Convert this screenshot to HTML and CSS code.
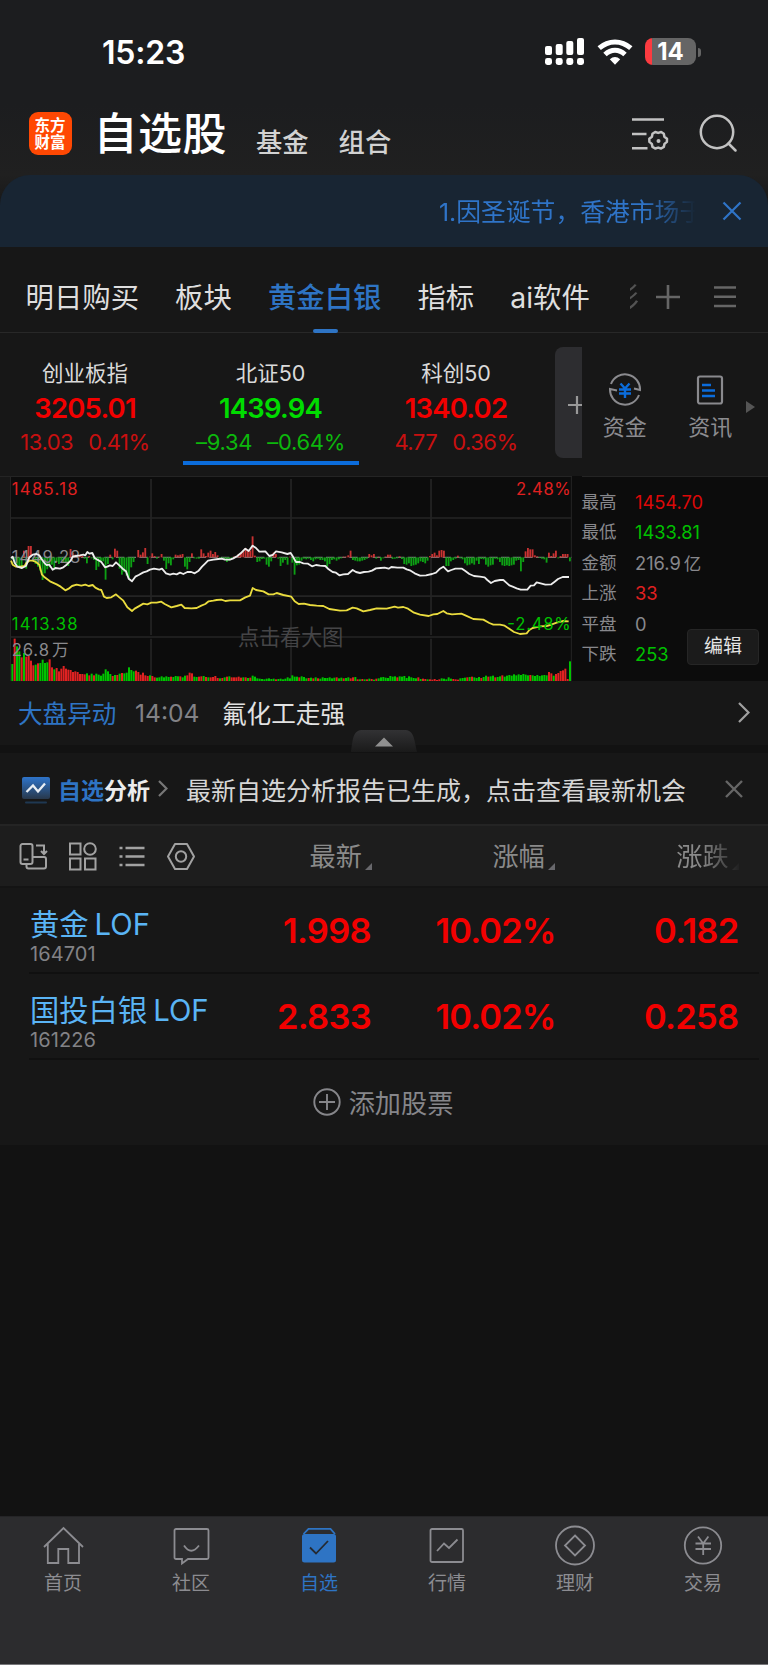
FILE: index.html
```html
<!DOCTYPE html>
<html lang="zh-CN">
<head>
<meta charset="utf-8">
<title>自选股</title>
<link rel="stylesheet" href="styles.css">
</head>
<body>
<div class="screen">
  <div class="status">
    <span class="time">15:23</span>
    <svg class="signal" width="40" height="28" viewBox="0 0 40 28" fill="#fff"><rect x="0" y="8" width="7" height="9" rx="2"/><rect x="10.7" y="6" width="7" height="11" rx="2"/><rect x="21.3" y="3" width="7" height="14" rx="2"/><rect x="32" y="0" width="7" height="17" rx="2"/><rect x="0" y="20" width="7" height="7" rx="2.4"/><rect x="10.7" y="20" width="7" height="7" rx="2.4"/><rect x="21.3" y="20" width="7" height="7" rx="2.4"/><rect x="32" y="20" width="7" height="7" rx="2.4"/></svg>
    <svg class="wifi" width="36" height="27" viewBox="0 0 36 27"><g fill="none" stroke="#fff" stroke-width="5"><path d="M2.2 9.2Q9.2 3 18 3t15.800 6.200"/><path d="M8 15.500Q12.500 11.300 18 11.300t10 4.200"/></g><path d="M12.800 20.200Q18 15.800 23.200 20.200L18 25.800Z" fill="#fff"/></svg>
    <div class="battery"><b>14</b></div><i class="nub"></i>
  </div>

  <header class="header">
    <div class="logo"><span>东方</span><span>财富</span></div>
    <h1>自选股</h1>
    <span class="sub fund">基金</span>
    <span class="sub group">组合</span>
    <svg class="manage" width="39" height="36" viewBox="0 0 39 36" fill="none" stroke="#c2c2c2" stroke-width="2.500"><path d="M1 3.500h32M1 18h14.500M1 32.300h15.500"/><path d="M24.200 16l3 .9 3-.9 2.600 1.700.6 3 2.600 2-.1 3.200-2.400 2-.7 3-2.700 1.600-2.900-.9-3 .9-2.700-1.600-.7-3-2.400-2-.1-3.200 2.600-2 .6-3Z" stroke-linejoin="round"/><circle cx="27.500" cy="25" r="2" fill="#c2c2c2" stroke="none"/></svg>
    <svg class="search" width="39" height="39" viewBox="0 0 39 39" fill="none" stroke="#c2c2c2" stroke-width="2.500"><circle cx="18" cy="18" r="16.200"/><path d="M29.500 29.500l7 7" stroke-linecap="round"/></svg>
  </header>

  <div class="notice-wrap"><div class="notice">
    <span class="notice-text">1.因圣诞节，香港市场于</span>
    <svg width="20" height="20" viewBox="0 0 20 20" stroke="#2f74c8" stroke-width="2.200"><path d="M1.500 1.500l17 17M18.500 1.500l-17 17"/></svg>
  </div></div>

  <nav class="tabs">
    <span>明日购买</span><span>板块</span><span class="on">黄金白银</span><span>指标</span><span>ai软件</span><span class="cut">彩</span>
    <svg class="plus" width="24" height="24" viewBox="0 0 24 24" stroke="#666" stroke-width="2.600"><path d="M12 0v24M0 12h24"/></svg>
    <svg class="menu" width="22" height="24" viewBox="0 0 22 24" stroke="#666" stroke-width="2.600"><path d="M0 2.500h22M0 11.800h22M0 21h22"/></svg>
  </nav>

  <section class="indices">
    <div class="index up"><em>创业板指</em><b>3205.01</b><p><span>13.03</span><span>0.41%</span></p></div>
    <div class="index down active"><em>北证50</em><b>1439.94</b><p><span>–9.34</span><span>–0.64%</span></p></div>
    <div class="index up third"><em>科创50</em><b>1340.02</b><p><span>4.77</span><span>0.36%</span></p></div>
    <div class="add"><svg width="14" height="18" viewBox="0 0 14 18" stroke="#999" stroke-width="2.200"><path d="M9 0v18M0 9h14"/></svg></div>
    <div class="tool capital"><svg width="34" height="34" viewBox="0 0 34 34" fill="none" stroke="#8a8a8e" stroke-width="2"><path d="M3 11A15 15 0 0 1 32 17l-6-1.500M31 22A15 15 0 0 1 2 16l7 1.500"/><path stroke="#0b6cdb" stroke-width="2.400" d="M12.500 10.500l4.500 5 4.500-5M11 16.500h12M11 20.500h12M17 15.500V25"/></svg><span>资金</span></div>
    <div class="tool news"><svg width="28" height="34" viewBox="0 0 28 34" fill="none" stroke="#8a8a8e" stroke-width="2.200"><rect x="2" y="3.500" width="24" height="27" rx="2"/><path stroke="#0b6cdb" stroke-width="2.500" d="M6 12h9M6 17.500h13M6 23h13"/></svg><span>资讯</span></div>
    <i class="more"></i>
  </section>

  <section class="market">
    <svg class="chart" width="576" height="206" viewBox="0 18 1728 618">
      <rect x="33" y="20" width="1680" height="614" fill="#0c0c0c"/>
      <g stroke="#242424" fill="none"><path stroke-width="3" d="M0 19.500H1728M31.500 20V634H1714V20"/><path stroke-width="5" d="M33 144H1714M33 378.500H1714M33 501H1714M453 27V495M873 27V495M1293 27V495M453 506V634M873 506V634M1293 506V634"/></g>
      <path d="M33 262H1714" stroke="#777" stroke-width="3.500" stroke-dasharray="25 10"/>
      <text x="714" y="525" font-size="64" fill="#454547" textLength="316">点击看大图</text>
      <g id="flow"></g>
      <text x="35" y="278" font-size="50" fill="#88888c" textLength="206">1449.28</text>
      <g id="volume"></g>
      <g fill="none" stroke-width="5.500" stroke-linejoin="round"><polyline id="average" stroke="#eadc3e"/><polyline id="price" stroke="#ececec"/></g>
      <text x="35" y="74" font-size="50" fill="#e02020" textLength="198">1485.18</text>
      <text x="35" y="481" font-size="50" fill="#00c000" textLength="198">1413.38</text>
      <text x="1548" y="74" font-size="50" fill="#e02020" textLength="164">2.48%</text>
      <text x="1522" y="481" font-size="50" fill="#00c000" textLength="190">-2.48%</text>
      <text x="35" y="558" font-size="50" fill="#8a8a8e" textLength="112">26.8</text>
      <text x="156" y="558" font-size="50" fill="#8a8a8e">万</text>
    </svg>
    <dl class="stats">
      <dt>最高</dt><dd class="r">1454.70</dd>
      <dt>最低</dt><dd class="g">1433.81</dd>
      <dt>金额</dt><dd>216.9<small>亿</small></dd>
      <dt>上涨</dt><dd class="rr">33</dd>
      <dt>平盘</dt><dd>0</dd>
      <dt>下跌</dt><dd class="g">253</dd>
    </dl>
    <button class="edit">编辑</button>
  </section>

  <div class="alert">
    <span class="alert-name">大盘异动</span><span class="alert-time">14:04</span><span class="alert-text">氟化工走强</span>
    <svg width="12" height="21" viewBox="0 0 12 21" fill="none" stroke="#a0a0a0" stroke-width="2.200"><path d="M1 1l9.500 9.500L1 20"/></svg>
    <svg class="handle" width="68" height="22" viewBox="0 0 68 22"><defs><linearGradient id="hg" x1="0" y1="0" x2="0" y2="1"><stop offset="0" stop-color="#323234"/><stop offset="1" stop-color="#1a1a1a"/></linearGradient></defs><path d="M1 22C3 8 3 0 13 0h41c10 0 10 8 13 22Z" fill="url(#hg)"/><path d="M25 16.500l9-9 9 9Z" fill="#909090"/></svg>
  </div>

  <div class="analysis">
    <svg class="badge" width="30" height="28" viewBox="0 0 30 28"><defs><linearGradient id="bg" x1="0" y1="0" x2="0" y2="1"><stop offset="0" stop-color="#2e74ca"/><stop offset="1" stop-color="#28384b"/></linearGradient></defs><rect x="1" y="0" width="28" height="22" rx="2" fill="url(#bg)"/><rect x="4" y="24.500" width="22" height="2" rx="1" fill="#1f3852"/><path d="M5.500 15l6.500-6.500 5 6 7-8" fill="none" stroke="#e8eef4" stroke-width="2.300"/></svg>
    <strong><span>自选</span>分析</strong>
    <svg class="chev" width="10" height="17" viewBox="0 0 10 17" fill="none" stroke="#777" stroke-width="2.200"><path d="M1 1l7.500 7.500L1 16"/></svg>
    <span class="analysis-text">最新自选分析报告已生成，点击查看最新机会</span>
    <svg width="18" height="18" viewBox="0 0 18 18" stroke="#666" stroke-width="2.400"><path d="M1 1l16 16M17 1L1 17"/></svg>
  </div>

  <div class="thead">
    <svg class="views" width="180" height="30" viewBox="0 0 180 30" fill="none" stroke="#a2a2a2" stroke-width="2">
      <path d="M7 22H3.500a2 2 0 0 1-2-2V4a2 2 0 0 1 2-2h8a2 2 0 0 1 2 2V14M4.500 17.500h5M17 3.500h8V11M22 9l3 3 3-3"/><path d="M13.500 14v6a2 2 0 0 1-2 2H7.500v2.500a2 2 0 0 0 2 2H25a2 2 0 0 0 2-2V17a2 2 0 0 0-2-2H13.500"/>
      <rect x="51" y="1.500" width="10.500" height="11"/><circle cx="71" cy="7" r="5.800"/><rect x="51" y="16.500" width="10.500" height="11"/><rect x="66" y="16.500" width="10.500" height="11"/>
      <path stroke-width="2.600" d="M106.500 6h19M106.500 14.500h19M106.500 23h19M100.500 6h3M100.500 14.500h3M100.500 23h3"/>
      <path stroke-linejoin="round" d="M156 2h12l7 12.500-7 12.500h-12L149 14.500Z"/><circle cx="162" cy="14.500" r="5.200"/>
    </svg>
    <span class="h1c">最新<i></i></span><span class="h2c">涨幅<i></i></span><span class="h3c">涨跌<i></i></span>
  </div>

  <div class="rows">
    <div class="row"><div class="stock"><span class="name">黄金<u>LOF</u></span><span class="code">164701</span></div><b>1.998</b><b>10.02%</b><b>0.182</b></div>
    <div class="row"><div class="stock"><span class="name">国投白银<u>LOF</u></span><span class="code">161226</span></div><b>2.833</b><b>10.02%</b><b>0.258</b></div>
    <div class="addstock"><svg width="28" height="28" viewBox="0 0 28 28" fill="none" stroke="#86868a" stroke-width="1.900"><circle cx="14" cy="14" r="12.700"/><path d="M14 6v16M6 14h16"/></svg><span>添加股票</span></div>
  </div>

  <footer class="tabbar">
    <div><svg width="42" height="42" viewBox="0 0 42 42"><path d="M2 22L21.500 3 41 22M5.800 19v19h10.500V24h10v14H37V19"/></svg><span>首页</span></div>
    <div><svg width="42" height="42" viewBox="0 0 42 42"><path d="M6 4H37a1.500 1.500 0 0 1 1.500 1.500V32.500a1.500 1.500 0 0 1-1.500 1.500H18l-6 4.500V34H6a1.500 1.500 0 0 1-1.500-1.500V5.500A1.500 1.500 0 0 1 6 4Z"/><path d="M14 20.500q7 10.500 15 0"/></svg><span>社区</span></div>
    <div class="on"><svg width="42" height="42" viewBox="0 0 42 42"><path d="M5.500 9l5-5.200h22L37 9" /><rect x="4" y="9" width="34" height="28.500" rx="2.500" fill="#2e74c4" stroke="none"/><path d="M12 22.500l6 6L30 16" stroke="#252a31"/></svg><span>自选</span></div>
    <div><svg width="42" height="42" viewBox="0 0 42 42"><rect x="4.500" y="4" width="32.500" height="33" rx="1.500"/><path d="M11 26l7-7.500 5 4.500 8.500-8.500"/></svg><span>行情</span></div>
    <div><svg width="42" height="42" viewBox="0 0 42 42"><circle cx="21" cy="20.500" r="19"/><path d="M21 10.500l10 10-10 10-10-10Z"/></svg><span>理财</span></div>
    <div><svg width="42" height="42" viewBox="0 0 42 42"><circle cx="21" cy="20.500" r="18.200"/><path d="M16 11.500l5.200 7 5.200-7M13.500 18.500h15.500M13.500 24h15.500M21.200 18.500V30"/></svg><span>交易</span></div>
  </footer>
</div>
<script src="chart.js"></script>
</body>
</html>
```

FILE: styles.css
```css
* { box-sizing: border-box; }
body, h1, p, dl, dd { margin: 0; }
body { background: #121212; color: #e0e0e0; font-family: Inter, "Noto Sans CJK SC", sans-serif; }
em, i { font-style: normal; }
u { text-decoration: none; }
svg { display: block; flex: none; }
span, em, b { white-space: nowrap; }
.screen { width: 768px; height: 1665px; display: flex; flex-direction: column; overflow: hidden; }

.status { height: 104px; display: flex; align-items: center; background: #1c1d1f; flex: none; }
.time { width: 442px; margin-left: 102px; padding-top: 1px; font-size: 32px; font-weight: 600; color: #fff; letter-spacing: -.2px; }
.signal { margin-left: 1px; }
.wifi { margin-left: 11.500px; }
.battery { margin-left: 12.500px; width: 51px; height: 27px; margin-top: -1px; border-radius: 8px; background: linear-gradient(90deg, #fc3b40 7px, #656565 7px); color: #fff; font-size: 24px; line-height: 27px; text-align: center; }
.battery b { font-weight: 700; }
.nub { width: 3.500px; height: 9px; margin-left: 1.500px; border-radius: 0 5px 5px 0; background: #656565; }

.header { height: 71px; padding-bottom: 12px; display: flex; align-items: center; background: linear-gradient(#1c1d1f, #202020); flex: none; }
.logo { margin-left: 28.500px; width: 43px; height: 43px; border-radius: 9px; background: #ff4803; color: #fff; display: flex; flex-direction: column; align-items: center; justify-content: center; }
.logo span { font-size: 15.500px; line-height: 17px; font-weight: 700; }
h1 { margin-left: 22px; width: 135px; padding-top: 1px; font-size: 44px; font-weight: 500; line-height: 60px; color: #fff; white-space: nowrap; letter-spacing: .5px; }
.sub { font-size: 26.300px; line-height: 30px; padding-top: 19px; font-weight: 500; color: #d2d2d2; }
.fund { margin-left: 27.500px; }
.group { margin-left: 30px; }
.manage { margin-left: auto; }
.search { margin: 0 30px 0 29px; }

.notice-wrap { flex: none; background: linear-gradient(#202020, #181818 30px); }
.notice { height: 72px; display: flex; align-items: center; justify-content: flex-end; padding-right: 26px; border-radius: 30px 30px 0 0; background: #182533; }
.notice-text { width: 257px; overflow: hidden; margin-right: 26px; margin-top: -3px; font-size: 24.800px; color: #2f74c8; -webkit-mask-image: linear-gradient(90deg, #000 80%, transparent 100%); mask-image: linear-gradient(90deg, #000 80%, transparent 100%); }

.tabs { height: 86px; flex: none; display: flex; align-items: stretch; padding: 0 32px 0 25.500px; background: #171717; border-bottom: 1px solid #282828; font-size: 28.400px; color: #dedede; }
.tabs span { margin-right: 36px; line-height: 101px; }
.tabs svg { align-self: center; margin-top: 14px; }
.tabs .on { color: #2e74c4; font-weight: 500; position: relative; }
.tabs .on::after { content: ""; position: absolute; left: 50%; margin-left: -12px; bottom: -1px; width: 25px; height: 4px; border-radius: 2px; background: #2e74c4; }
.tabs .cut { width: 9px; overflow: hidden; margin: 0 0 0 4px; opacity: .3; direction: rtl; }
.tabs .plus { margin-left: auto; }
.tabs .menu { margin-left: 34px; }

.indices { height: 143px; flex: none; display: flex; background: #171717; }
.index { width: 170px; display: flex; flex-direction: column; align-items: center; padding-top: 25px; }
.index.active { width: 201px; }
.index em { font-size: 21.500px; line-height: 31px; color: #dadada; }
.index b { font-size: 27.500px; line-height: 34px; font-weight: 600; margin-top: 2px; letter-spacing: -.8px; }
.index p { display: flex; gap: 15px; font-size: 22px; line-height: 28px; margin-top: 3px; letter-spacing: -.5px; }
.up b { color: #f20000; } .up p { color: #c81010; }
.down b { color: #00dc00; } .down p { color: #0cb80c; }
.active p { width: 176px; justify-content: center; height: 37px; border-bottom: 4px solid #0b6cdb; letter-spacing: -.3px; }
.add { margin: 14px 0 0 14px; width: 27px; height: 111px; border-radius: 8px 0 0 8px; background: #2d2d30; display: flex; align-items: center; justify-content: flex-end; padding-top: 5px; }
.tool { width: 85.500px; padding-top: 40px; display: flex; flex-direction: column; align-items: center; gap: 4px; }
.tool span { font-size: 22px; line-height: 32px; color: #8c8c90; }
.more { align-self: center; margin: 4px 0 0 -7px; border-left: 9px solid #555; border-top: 6px solid transparent; border-bottom: 6px solid transparent; }

.market { height: 205px; flex: none; display: flex; position: relative; background: #0c0c0c; }
.chart { font-family: Inter, "Noto Sans CJK SC", sans-serif; background: #171717; clip-path: inset(0 4px 0 0); }
.stats { flex: 1; margin-left: 5.500px; padding-top: 10px; border-top: 1px solid #242424; display: grid; grid-template-columns: 53.500px 1fr; grid-auto-rows: 30.400px; font-size: 18.300px; line-height: 30px; color: #88888c; align-content: start; }
.stats dt { font-size: 17.500px; }
.stats .r { color: #dc0808; } .stats .rr { color: #e02020; } .stats .g { color: #00c000; }
.stats small { font-size: 17.500px; margin-left: 3px; }
.edit { position: absolute; left: 687px; top: 153px; width: 72px; height: 36px; border: 1px solid #262626; border-radius: 4px; background: #1b1b1b; color: #e4e4e4; font: 19px/34px Inter, "Noto Sans CJK SC", sans-serif; padding: 0; }

.alert { height: 72px; flex: none; display: flex; align-items: center; padding: 0 18px 2px 18px; font-size: 24.600px; background: #171717; border-bottom: 8px solid #121212; position: relative; }
.alert-name { color: #2e74c4; width: 117px; }
.alert-time { color: #828286; width: 87px; padding-top: 2px; }
.alert-text { color: #e2e2e2; flex: 1; }
.handle { position: absolute; left: 350px; bottom: -7px; }

.analysis { height: 73px; flex: none; display: flex; align-items: center; padding: 0 25px 0 21px; background: #171717; border-bottom: 2px solid #242424; }
.badge { margin-top: 4px; }
.analysis strong { margin: 0 8px 0 7px; font-size: 23px; font-weight: 700; color: #ececec; white-space: nowrap; }
.analysis strong span { color: #2e74c4; }
.analysis-text { margin-left: 18px; flex: 1; font-size: 25px; color: #d6d6d6; }

.thead { height: 62px; flex: none; display: flex; align-items: center; background: linear-gradient(#1d1d1d 60px, #141414 60px); color: #8a8a8a; font-size: 26.200px; padding-left: 19px; }
.thead span { display: flex; align-items: flex-end; line-height: 38px; }
.thead span i { margin: 0 0 6px 3px; border-bottom: 7px solid #68686c; border-left: 7px solid transparent; }
.h1c { margin-left: 110.500px; } .h2c { margin-left: 120.500px; } .h3c { margin-left: 121.500px; -webkit-mask-image: linear-gradient(90deg, #000 40%, transparent 105%); mask-image: linear-gradient(90deg, #000 40%, transparent 105%); }

.rows { background: #171717; height: 257px; flex: none; }
.row { height: 86px; margin: 0 9px 0 29px; border-bottom: 2px solid #101010; display: grid; grid-template-columns: 180px 162px 184.500px 183px; }
.stock { display: flex; flex-direction: column; padding: 18px 0 0 1px; }
.name { color: #5ab4f5; font-size: 29.300px; line-height: 38px; }
.name u { margin-left: 6px; }
.code { color: #828286; font-size: 20px; line-height: 20px; letter-spacing: .1px; }
.row b { font-size: 34.500px; font-weight: 600; line-height: 85px; color: #f20000; text-align: right; letter-spacing: -.7px; }
.row b:nth-of-type(2) { letter-spacing: -.9px; }
.addstock { height: 83px; display: flex; align-items: center; justify-content: center; gap: 8px; padding-right: 2px; color: #86868a; font-size: 26.200px; }

.tabbar { margin-top: auto; height: 149px; flex: none; display: grid; grid-template-columns: repeat(6, 128px); background: #2c2c2e; border-top: 1px solid #242426; border-bottom: 1px solid #77777a; color: #8c8c91; }
.tabbar div { display: flex; flex-direction: column; align-items: center; padding: 7.500px 1.500px 0 0; }
.tabbar svg { fill: none; stroke: #8c8c91; stroke-width: 1.800; }
.tabbar span { font-size: 19px; line-height: 28px; margin: 3px .5px 0 0; }
.tabbar .on { color: #2e74c4; }
.tabbar .on svg { stroke: #2e74c4; }
```

FILE: chart.js
```js
const price = "33,264 38,260 44,278 52,290 66,294 78,288 88,262 98,254 110,252 118,256 124,266 134,280 140,285 148,284 158,299 166,294 180,296 190,292 200,284 212,272 218,260 228,258 240,256 250,254 256,256 262,246 268,251 277,249 284,264 292,269 304,276 315,292 322,290 330,286 338,288 348,277 358,286 368,296 378,304 386,326 396,334 406,320 416,315 430,307 440,304 450,299 462,296 478,299 486,296 498,310 510,314 520,311 530,313 540,308 550,312 562,306 574,306 584,310 596,302 606,290 616,280 624,272 640,269 655,267 665,266 675,269 690,269 700,265 712,258 722,250 736,236 746,243 758,227 768,234 778,245 796,244 808,258 818,255 828,244 845,247 862,252 872,249 880,262 888,276 900,276 910,280 924,281 936,289 948,285 960,287 976,288 986,298 998,306 1008,308 1018,316 1030,313 1044,312 1058,300 1068,306 1080,309 1092,306 1106,305 1116,302 1128,295 1142,294 1154,293 1166,296 1174,291 1192,293 1210,293 1220,298 1232,302 1244,310 1260,317 1278,316 1296,312 1308,308 1320,296 1330,290 1344,304 1354,300 1366,296 1386,296 1396,303 1408,312 1422,318 1440,320 1454,322 1462,330 1473,339 1484,333 1500,330 1510,330 1518,337 1528,346 1538,350 1550,355 1562,359 1582,359 1592,347 1602,346 1610,337 1622,340 1636,344 1654,343 1664,335 1674,327 1688,321 1707,321";
const average = "33,272 38,284 48,290 60,290 74,288 78,280 88,272 98,272 108,276 118,284 126,314 134,322 150,334 170,343 182,350 196,361 206,356 216,348 230,344 244,347 256,344 266,348 278,345 286,353 296,358 304,360 312,380 320,384 334,382 348,373 358,382 370,392 382,412 396,423 404,416 416,409 430,401 442,403 454,398 470,398 484,395 494,402 514,412 530,408 544,404 554,414 574,415 590,414 604,407 616,402 626,394 640,392 650,390 664,389 676,393 690,391 720,391 736,382 750,377 758,354 768,360 790,364 806,373 820,373 830,369 850,375 874,380 884,394 896,402 912,401 930,405 950,407 970,408 988,417 1020,422 1040,421 1058,413 1070,415 1090,424 1110,420 1130,415 1160,416 1184,410 1194,413 1210,411 1224,416 1242,428 1260,434 1286,438 1300,433 1312,432 1330,423 1340,430 1356,433 1384,431 1396,436 1420,447 1450,449 1468,459 1480,464 1500,464 1514,467 1530,478 1542,486 1560,492 1580,490 1588,480 1598,474 1620,469 1640,468 1654,464 1670,458 1690,453 1706,454";
document.getElementById("price").setAttribute("points", price);
document.getElementById("average").setAttribute("points", average);

// One value per slot; positive is inflow, negative is outflow.
const flow = [
  -6,-18,-24,-30,-34,20,-34,34,34,-12,-20,-28,-40,-68,-48,-36,-30,-22,-38,-14,-20,-10,-14,-18,-26,25,14,8,6,8,
  4,-4,-18,4,-3,-8,-38,-28,-14,-12,-67,-20,8,-6,26,20,-34,-52,-44,-55,-65,-30,-14,0,22,8,15,28,-20,2,
  12,4,-4,2,10,-10,-35,-18,-24,-6,8,6,8,10,-28,-36,-14,12,-3,-4,-4,24,12,4,14,20,10,16,6,-6,
  -3,-8,-14,-10,-3,2,4,10,14,18,28,20,20,63,5,-14,-12,-5,-4,-22,-28,-12,14,10,-4,-26,-16,-8,-22,2,
  -16,-52,-24,-22,-10,-4,-6,-4,-8,-12,-6,-4,-8,-8,-12,-28,-20,-8,-6,-10,-6,-3,2,2,6,20,-8,-10,-12,-12,
  -10,-8,-4,10,6,10,-4,2,-10,-3,2,8,8,-5,-4,-3,3,-5,-20,-22,-18,-26,-24,-22,-18,-12,-14,-18,-10,4,
  10,14,6,20,22,20,-26,-26,-12,-8,-4,5,-3,-6,-18,-24,-22,-18,-22,-10,-20,-5,-6,-22,-28,-24,-22,-4,-6,-14,
  -24,-26,-24,-26,-24,-22,-10,-8,-42,-14,18,28,24,24,6,3,-2,-4,-6,-16,14,4,12,20,-3,4,10,10,10,-12
];
const volume = [
  -52,128,-105,-90,72,-85,74,76,62,48,-50,54,-55,-65,-55,-57,66,42,-36,40,30,38,46,38,35,34,28,30,28,22,
  22,21,-24,18,-23,18,-23,-20,-17,-23,-36,-30,-22,16,-19,19,-23,25,-24,-26,-42,-34,-30,32,28,20,26,18,16,-18,
  16,12,-11,-12,-15,-12,-15,-13,14,-13,-16,-15,15,-12,-17,18,26,24,-14,-13,14,15,-16,13,-12,12,13,16,10,-9,
  10,-12,14,-15,12,12,12,14,11,-12,12,-10,11,-17,-14,-9,-8,-7,-6,-8,-9,-7,-8,6,-7,-8,-6,-8,-12,-9,
  -18,-14,-14,12,-15,-13,-9,10,-11,9,-12,9,-8,-12,-10,-10,-12,-9,-11,12,-9,-11,9,-10,-12,9,12,-13,6,-6,
  7,-6,6,-8,7,-5,8,-9,-12,-13,-11,-10,-16,-14,-15,12,-15,-14,-16,-10,-15,-12,-10,-9,12,-7,8,7,-6,6,
  5,7,4,6,-9,-8,-6,-12,-8,7,6,5,-9,-10,-11,12,-13,14,-12,-10,-13,10,-13,-17,14,-15,-17,12,-13,-15,
  18,-14,-17,-19,-17,-21,-18,-21,-19,-22,-20,-18,19,-18,-16,-19,-16,-18,-19,-18,28,24,-17,22,25,31,33,38,7,-60
];
const ns = "http://www.w3.org/2000/svg";
function bars(id, values, base, width, red, green) {
  const g = document.getElementById(id);
  const signed = id === "flow";
  values.forEach((v, i) => {
    const r = document.createElementNS(ns, "rect");
    const h = Math.abs(v);
    r.setAttribute("x", 34 + i * 7);
    r.setAttribute("y", signed && v < 0 ? base : base - h);
    r.setAttribute("width", width);
    r.setAttribute("height", h);
    r.setAttribute("fill", v < 0 ? green : red);
    g.appendChild(r);
  });
}
bars("flow", flow, 262, 5.5, "#c83232", "#0da014");
bars("volume", volume, 634, 6, "#e02222", "#00c400");
```
